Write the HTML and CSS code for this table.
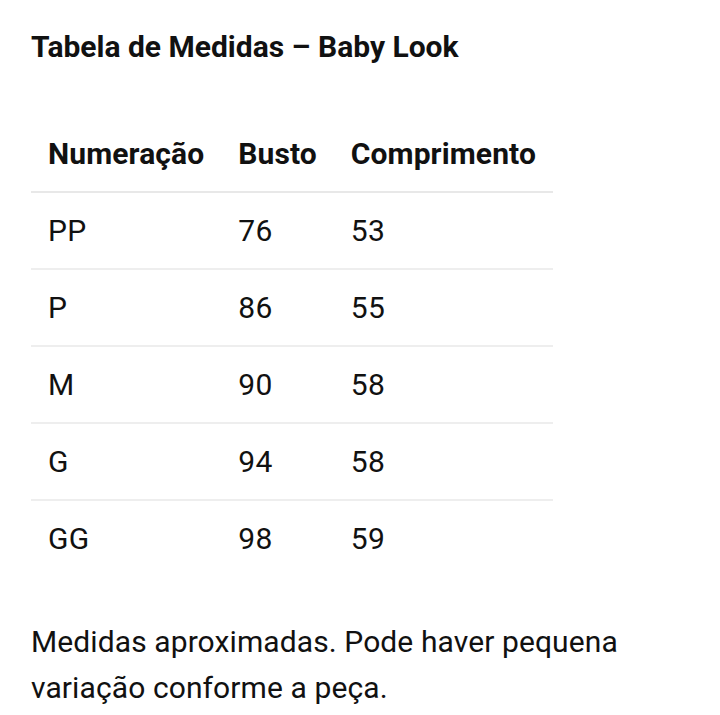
FILE: index.html
```html
<!DOCTYPE html>
<html lang="pt-BR">
<head>
<meta charset="utf-8">
<title>Tabela de Medidas – Baby Look</title>
<link rel="stylesheet" href="styles.css">
</head>
<body>
<main class="page">
  <h2 class="title">Tabela de Medidas – Baby Look</h2>
  <table class="sizes">
    <thead>
      <tr><th>Numeração</th><th>Busto</th><th>Comprimento</th></tr>
    </thead>
    <tbody>
      <tr><td>PP</td><td>76</td><td>53</td></tr>
      <tr><td>P</td><td>86</td><td>55</td></tr>
      <tr><td>M</td><td>90</td><td>58</td></tr>
      <tr><td>G</td><td>94</td><td>58</td></tr>
      <tr><td>GG</td><td>98</td><td>59</td></tr>
    </tbody>
  </table>
  <p class="note">Medidas aproximadas. Pode haver pequena variação conforme a peça.</p>
</main>
</body>
</html>
```
FILE: styles.css
```css
html, body {
  margin: 0;
  background: #ffffff;
}
body {
  font-family: Roboto, "Noto Sans", sans-serif;
  color: #111111;
}
.page {
  padding: 28px 31px 0 31px;
}
.title {
  margin: 0;
  font-size: 30px;
  font-weight: 700;
  line-height: 38px;
  color: #111111;
}
.sizes {
  margin-top: 50px;
  border-collapse: collapse;
}
.sizes th,
.sizes td {
  text-align: left;
  padding: 0 17px;
  font-size: 30px;
  height: 75px;
  vertical-align: middle;
}
.sizes th {
  font-weight: 700;
  letter-spacing: 0.1px;
  border-bottom: 2px solid #e8e8e8;
}
.sizes td {
  font-weight: 400;
  letter-spacing: 0.3px;
  border-bottom: 2px solid #eeeeee;
}
.sizes tbody tr:last-child td {
  border-bottom: none;
}
.note {
  margin: 43px 0 0 0;
  font-size: 30px;
  letter-spacing: 0.1px;
  line-height: 46px;
  color: #111111;
}
```
